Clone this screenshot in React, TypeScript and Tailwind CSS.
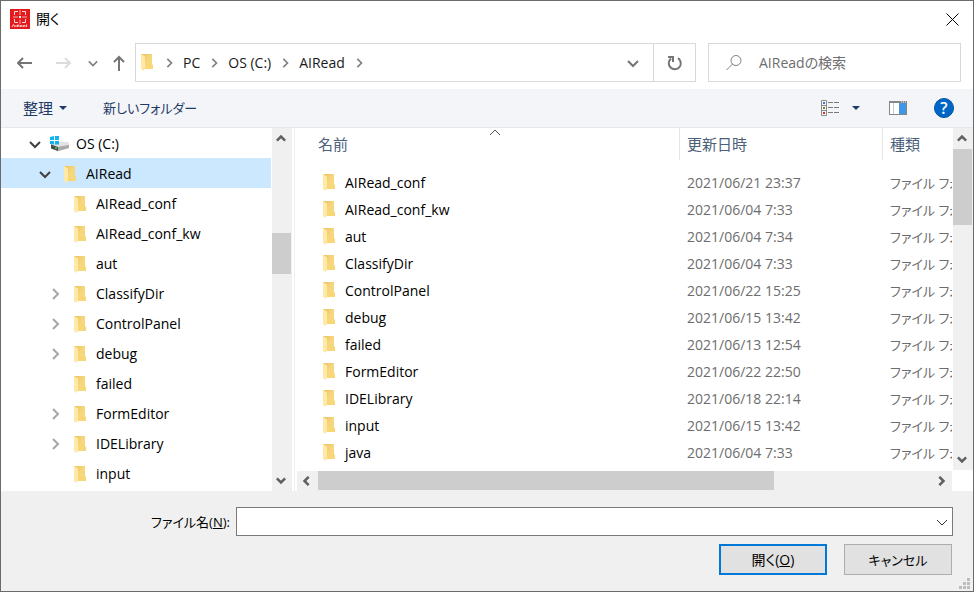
import React from 'react';
import { clsx } from 'clsx';

const treeItems = [
  { name: 'OS (C:)', depth: 0, state: 'open', drive: true },
  { name: 'AIRead', depth: 1, state: 'open', selected: true },
  { name: 'AIRead_conf', depth: 2 },
  { name: 'AIRead_conf_kw', depth: 2 },
  { name: 'aut', depth: 2 },
  { name: 'ClassifyDir', depth: 2, state: 'closed' },
  { name: 'ControlPanel', depth: 2, state: 'closed' },
  { name: 'debug', depth: 2, state: 'closed' },
  { name: 'failed', depth: 2 },
  { name: 'FormEditor', depth: 2, state: 'closed' },
  { name: 'IDELibrary', depth: 2, state: 'closed' },
  { name: 'input', depth: 2 },
];

const files = [
  ['AIRead_conf', '2021/06/21 23:37'],
  ['AIRead_conf_kw', '2021/06/04 7:33'],
  ['aut', '2021/06/04 7:34'],
  ['ClassifyDir', '2021/06/04 7:33'],
  ['ControlPanel', '2021/06/22 15:25'],
  ['debug', '2021/06/15 13:42'],
  ['failed', '2021/06/13 12:54'],
  ['FormEditor', '2021/06/22 22:50'],
  ['IDELibrary', '2021/06/18 22:14'],
  ['input', '2021/06/15 13:42'],
  ['java', '2021/06/04 7:33'],
];

const indent = ['pl-7', 'pl-[38px]', 'pl-12'];

const chevronPaths: any = {
  up: 'M1 8 L6 3 L11 8',
  down: 'M1 4 L6 9 L11 4',
  left: 'M8 1 L3 6 L8 11',
  right: 'M4 1 L9 6 L4 11',
};

function Chevron({ dir, size = 12, width = 2, className = 'text-[#505050]' }: any) {
  return (
    <svg width={size} height={size} viewBox="0 0 12 12" fill="none" stroke="currentColor" strokeWidth={width} className={clsx('shrink-0', className)}>
      <path d={chevronPaths[dir]} />
    </svg>
  );
}

function FolderIcon() {
  return (
    <svg width="12" height="17" viewBox="0 0 12 17" className="shrink-0">
      <defs>
        <linearGradient id="folder" x1="0" x2="1" y1="0" y2="1">
          <stop offset="0" stopColor="#e9c264" />
          <stop offset="0.5" stopColor="#f7d77d" />
          <stop offset="1" stopColor="#f9d774" />
        </linearGradient>
      </defs>
      <path d="M0 0H11V10L12 11V15H0Z" fill="url(#folder)" />
      <path d="M0 0L4 2.5V14.5L2.5 17L0 15Z" fill="#ffe9a6" />
    </svg>
  );
}

function DriveIcon() {
  return (
    <svg width="20" height="16" viewBox="0 0 20 16" className="shrink-0">
      <path d="M1 8L8 6H18L19 9V12L8 15L1 12Z" fill="#c9c9c9" />
      <path d="M1 8L8 6H18L19 9L8 11Z" fill="#e2e2e2" />
      <path d="M1 8.5L8 11V15L1 12.5Z" fill="#4a4a4a" />
      <path d="M8 11L19 9V12L8 15Z" fill="#a9a9a9" />
      <rect x="5" y="11" width="2" height="2" fill="#35c04a" />
      <path d="M0 1L4 0V4H0ZM5 0H9V4H5ZM0 5H4V8.5L0 8ZM5 5H9V8.5H5Z" fill="#12b3ee" />
    </svg>
  );
}

function AppIcon() {
  return (
    <svg width="20" height="20" viewBox="0 0 20 20" className="shrink-0">
      <rect width="20" height="20" fill="#e3191b" />
      <path d="M4.5 6V2.5H8M12 2.5H15.5V6M15.5 10V13.5H12M8 13.5H4.5V10" fill="none" stroke="#fbdcdc" />
      <path d="M10 1V6M10 10.500V15M3 8H8M12 8H17" stroke="#f5a9a9" />
      <path d="M9 8H11" stroke="#fff" strokeWidth="2" />
      <path d="M2 18L3.500 15.500L5 18M6 16V18M7.500 18V16H9V18M10.500 18V16.500H12V18M13.500 18V16.500H15V18M16.500 18V15.500" fill="none" stroke="#fbd0d0" />
    </svg>
  );
}

function ArrowIcon({ dir, className }: any) {
  return (
    <svg width="16" height="16" viewBox="0 0 16 16" fill="none" stroke="currentColor" strokeWidth="2" className={className}>
      {dir === 'left' && <path d="M15 8H1M6 3L1 8L6 13" />}
      {dir === 'right' && <path d="M0 8H14M9 3L14 8L9 13" />}
      {dir === 'up' && <path d="M8 16V2M3 7L8 2L13 7" />}
    </svg>
  );
}

function ViewIcon() {
  return (
    <svg width="19" height="16" viewBox="0 0 19 16" fill="none">
      <path d="M.5 .5H5.5V15.5H.5ZM.5 5.5H5.5M.5 10.5H5.5" stroke="#8a8a8a" />
      <rect x="2" y="2" width="2" height="2" fill="#3b7fc4" />
      <rect x="2" y="7" width="2" height="2" fill="#5f8f3a" />
      <rect x="2" y="12" width="2" height="2" fill="#c8321e" />
      <path d="M7 2.5H18M7 7.5H18M7 12.5H18" stroke="#7a7a7a" strokeDasharray="5 1" />
    </svg>
  );
}

function PreviewPaneIcon() {
  return (
    <svg width="18" height="14" viewBox="0 0 18 14">
      <rect x=".5" y=".5" width="17" height="13" fill="#fff" stroke="#868686" />
      <rect width="18" height="2" fill="#868686" />
      <path d="M4.5 2V13" stroke="#c8c8c8" />
      <rect x="10" y="2" width="7" height="11" fill="#3f97e5" />
      <path d="M12 1H13M14 1H15M16 1H17" stroke="#fff" />
    </svg>
  );
}

function Caret() {
  return (
    <svg width="8" height="4" viewBox="0 0 8 4" fill="#1e3a66">
      <path d="M0 0H8L4 4Z" />
    </svg>
  );
}

function Crumb({ children }: any) {
  return (
    <>
      <button className="text-[#1a1a1a]">{children}</button>
      <Chevron dir="right" size={10} className="mx-[9px] text-[#808080]" />
    </>
  );
}

function Tree() {
  return (
    <ul className="min-w-0 flex-1 pr-px">
      {treeItems.map((item) => (
        <li key={item.name}>
          <button className={clsx('flex h-[30px] w-full items-center pt-[2px]', indent[item.depth], item.selected && 'bg-[#cce8ff]')}>
            <span className="flex w-3 justify-center">
              {item.state === 'open' && <Chevron dir="down" className="text-[#404040]" />}
              {item.state === 'closed' && <Chevron dir="right" className="text-[#a6a6a6]" />}
            </span>
            <span className="ml-[9px] flex w-5 justify-center">{item.drive ? <DriveIcon /> : <FolderIcon />}</span>
            <span className="ml-[6px]">{item.name}</span>
          </button>
        </li>
      ))}
    </ul>
  );
}

function VerticalScrollbar({ before, thumb }: any) {
  return (
    <div className="flex w-5 shrink-0 flex-col items-center bg-[#f0f0f0]">
      <button aria-label="上へスクロール" className="flex h-[21px] w-full items-center justify-center pr-[2px]"><Chevron dir="up" size={10} width={3} className="text-[#606060]" /></button>
      <div className="flex w-full flex-1 flex-col pr-px">
        <div className={before} />
        <div className={clsx('bg-[#cdcdcd]', thumb)} />
      </div>
      <button aria-label="下へスクロール" className="flex h-[21px] w-full items-center justify-center pr-[2px] pb-[2px]"><Chevron dir="down" size={10} width={3} className="text-[#606060]" /></button>
    </div>
  );
}

function FileTable() {
  return (
    <table className="w-full table-fixed text-left">
      <colgroup>
        <col />
        <col className="w-[203px]" />
        <col className="w-[70px]" />
      </colgroup>
      <thead className="text-[15px] text-[#4c607a]">
        <tr>
          <th className="relative p-0 pb-[9px] font-normal">
            <div className="flex h-8 items-center pl-[23px]">名前</div>
            <Chevron dir="up" size={12} width={1} className="absolute -top-px left-[194px] text-[#505050]" />
          </th>
          <th className="p-0 pb-[9px] font-normal">
            <div className="flex h-8 items-center border-l border-[#e5e5e5] pl-[7px]">更新日時</div>
          </th>
          <th className="p-0 pb-[9px] font-normal">
            <div className="flex h-8 items-center border-l border-[#e5e5e5] pl-[7px]">種類</div>
          </th>
        </tr>
      </thead>
      <tbody>
        {files.map(([name, date]) => (
          <tr key={name} className="h-[27px]">
            <td className="p-0">
              <div className="flex items-center gap-[10px] pl-7"><FolderIcon />{name}</div>
            </td>
            <td className="p-0 pl-2 text-[#6d6d6d]">{date}</td>
            <td className="overflow-hidden p-0 pl-2 text-[13px] whitespace-nowrap text-[#6d6d6d]">ファイル フォルダー</td>
          </tr>
        ))}
      </tbody>
    </table>
  );
}

export default function App() {
  return (
    <div lang="ja" className="flex min-h-screen flex-col border border-[#6b6b6b] bg-white font-['Open_Sans','Noto_Sans_CJK_JP',sans-serif] text-[14px] leading-5 text-black [font-feature-settings:'palt']">
      <header className="flex h-[36px] items-center justify-between pr-[14px] pl-[9px]">
        <h1 className="flex items-center gap-[6px]"><AppIcon />開く</h1>
        <button aria-label="閉じる">
          <svg width="13" height="13" viewBox="0 0 13 13" stroke="#000" strokeWidth="1"><path d="M.5 .5L12.5 12.5M12.5 .5L.5 12.5" /></svg>
        </button>
      </header>

      <div className="flex h-[52px] items-center pr-3 pb-[1px] pl-4">
        <button aria-label="戻る"><ArrowIcon dir="left" className="text-[#757575]" /></button>
        <button aria-label="進む" className="ml-[23px]"><ArrowIcon dir="right" className="text-[#dcdcdc]" /></button>
        <button aria-label="履歴" className="ml-4"><Chevron dir="down" size={10} className="text-[#808080]" /></button>
        <button aria-label="上へ" className="ml-[13px]"><ArrowIcon dir="up" className="text-[#757575]" /></button>
        <div className="ml-2 flex h-[39px] flex-1 border border-[#d9d9d9]">
          <nav className="flex flex-1 items-center pl-[5px]">
            <FolderIcon />
            <Chevron dir="right" size={10} className="mr-[9px] ml-[11px] text-[#808080]" />
            <Crumb>PC</Crumb>
            <Crumb>OS (C:)</Crumb>
            <Crumb>AIRead</Crumb>
          </nav>
          <button aria-label="以前の場所" className="flex w-10 items-center justify-center"><Chevron dir="down" className="text-[#757575]" /></button>
          <button aria-label="最新の情報に更新" className="flex w-[42px] items-center justify-center border-l border-[#d9d9d9]">
            <svg width="16" height="16" viewBox="0 0 16 16" fill="none" stroke="#757575" strokeWidth="2">
              <path d="M11 3.2A6 6 0 1 1 4 3.6" />
              <path d="M1 2H6V7" />
            </svg>
          </button>
        </div>
        <label className="ml-3 flex h-[39px] w-[253px] items-center border border-[#d9d9d9] pl-[17px]">
          <svg width="16" height="16" viewBox="0 0 16 16" fill="none" stroke="#808080" strokeWidth="1" className="shrink-0">
            <circle cx="10" cy="5.5" r="5" />
            <path d="M6.5 9L.5 15" />
          </svg>
          <input type="search" aria-label="検索" placeholder="AIReadの検索" className="ml-[17px] w-full min-w-0 outline-none placeholder:text-[#6d6d6d]" />
        </label>
      </div>

      <div className="flex h-[39px] items-center border-b border-[#e5e7ea] bg-[#f4f5f8] pr-[19px] pl-[22px] text-[#1e3a66]">
        <button className="flex items-center gap-[6px] text-[15px]">整理<Caret /></button>
        <button className="ml-[36px] text-[13px]">新しいフォルダー</button>
        <div className="ml-auto flex items-center">
          <button aria-label="表示方法の変更"><ViewIcon /></button>
          <button aria-label="その他のオプション" className="ml-3"><Caret /></button>
          <button aria-label="プレビュー ウィンドウ" className="ml-[29px]"><PreviewPaneIcon /></button>
          <button aria-label="ヘルプ" className="ml-[27px] flex h-5 w-5 items-center justify-center rounded-full border border-[#00529f] bg-[#0067c8] text-[16px] font-semibold text-white">?</button>
        </div>
      </div>

      <main className="flex h-[363px]">
        <div className="flex w-[291px] shrink-0 overflow-hidden">
          <Tree />
          <VerticalScrollbar before="h-[84px]" thumb="h-[41px]" />
        </div>
        <div className="ml-[2px] flex min-w-0 flex-1 flex-col border-l border-[#f0f0f0]">
          <div className="flex h-[342px]">
            <div className="mr-px min-w-0 flex-1 overflow-hidden"><FileTable /></div>
            <VerticalScrollbar before="h-0" thumb="h-[76px]" />
          </div>
          <div className="mt-px mr-[21px] ml-[2px] flex h-5 items-center bg-[#f0f0f0]">
            <button aria-label="左へスクロール" className="flex w-[21px] justify-center pr-[2px]"><Chevron dir="left" size={10} width={3} className="text-[#606060]" /></button>
            <div className="flex flex-1 self-stretch pb-px">
              <div className="grow-[456] bg-[#cdcdcd]" />
              <div className="grow-[157]" />
            </div>
            <button aria-label="右へスクロール" className="flex w-[21px] justify-center pr-[2px]"><Chevron dir="right" size={10} width={3} className="text-[#606060]" /></button>
          </div>
        </div>
      </main>

      <footer className="relative flex-1 bg-[#f0f0f0] pt-4 pr-5">
        <div className="flex items-center">
          <label htmlFor="filename" className="w-[235px] shrink-0 pr-[6px] text-right text-[13px]">ファイル名(<u>N</u>):</label>
          <div className="flex h-[29px] flex-1 border border-[#7a7a7a] bg-white">
            <input id="filename" type="text" className="min-w-0 flex-1 px-1 outline-none" />
            <button aria-label="ファイル名の履歴" className="flex w-5 items-center justify-center"><Chevron dir="down" width={1} className="text-[#303030]" /></button>
          </div>
        </div>
        <div className="mt-2 flex justify-end gap-[17px] pr-px">
          <button className="h-[31px] w-[108px] border-2 border-[#0078d7] bg-[#e1e1e1]">開く(<u>O</u>)</button>
          <button className="h-[31px] w-[108px] border border-[#adadad] bg-[#e1e1e1] text-[13px]">キャンセル</button>
        </div>
        <svg width="11" height="11" viewBox="0 0 11 11" fill="#bcbcbc" className="absolute right-[3px] bottom-[2px]">
          <path d="M8 0H11V3H8ZM8 4H11V7H8ZM4 4H7V7H4ZM8 8H11V11H8ZM4 8H7V11H4ZM0 8H3V11H0Z" />
        </svg>
      </footer>
    </div>
  );
}
